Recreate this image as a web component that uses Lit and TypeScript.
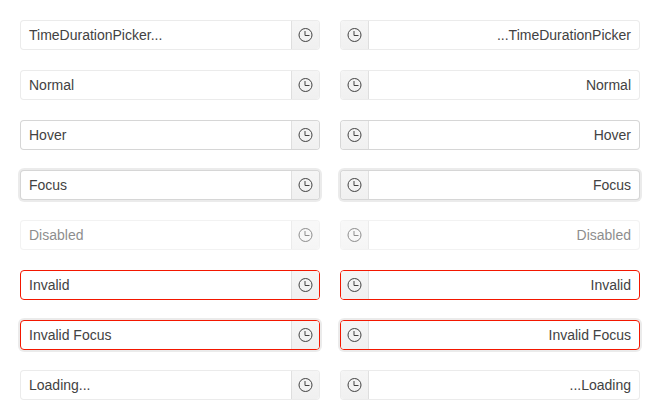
import { LitElement, html, css } from "lit";
import { customElement, property } from "lit/decorators.js";
import { classMap } from "lit/directives/class-map.js";

@customElement("duration-picker")
class DurationPicker extends LitElement {
  @property() value = "";
  @property() state = "";
  @property({ type: Boolean }) rtl = false;

  static styles = css`
    :host { display: block; }
    .picker {
      display: flex;
      box-sizing: border-box;
      width: 300px;
      height: 30px;
      border: 1px solid rgba(0, 0, 0, 0.08);
      border-radius: 4px;
      background: #fff;
      color: #424242;
      font: 14px/20px "Liberation Sans", Arial, sans-serif;
      overflow: hidden;
    }
    .rtl { direction: rtl; }
    .text { flex: 1; padding: 4px 8px; white-space: nowrap; }
    .button {
      display: flex;
      align-items: center;
      justify-content: center;
      width: 27px;
      border-inline-start: 1px solid rgba(0, 0, 0, 0.08);
      background: linear-gradient(#f5f5f5, #f0f0f0);
    }
    svg { display: block; width: 15px; height: 16px; }
    .hover { border-color: rgba(0, 0, 0, 0.16); }
    .focus { border-color: rgba(0, 0, 0, 0.16); box-shadow: 0 0 0 2px rgba(0, 0, 0, 0.08); }
    .disabled { opacity: 0.6; }
    .invalid { border-color: #f31700; }
    .invalid-focus { border-color: #f31700; box-shadow: 0 0 0 2px rgba(0, 0, 0, 0.08); }
  `;

  render() {
    const classes: Record<string, boolean> = { picker: true, rtl: this.rtl };
    if (this.state) classes[this.state] = true;
    return html`<div class=${classMap(classes)}>
      <div class="text">${this.value}</div>
      <div class="button">
        <svg viewBox="0 0 15 16" fill="none" stroke="currentColor">
          <circle cx="7.5" cy="8" r="6.5"></circle>
          <path d="M7 4v4.5H11.5"></path>
        </svg>
      </div>
    </div>`;
  }
}

@customElement("app-root")
class AppRoot extends LitElement {
  static styles = css`
    :host { display: block; background: #fff; }
    .grid {
      display: grid;
      grid-template-columns: 300px 300px;
      gap: 20px;
      padding: 20px;
    }
  `;

  render() {
    const rows = [
      ["TimeDurationPicker...", ""],
      ["Normal", ""],
      ["Hover", "hover"],
      ["Focus", "focus"],
      ["Disabled", "disabled"],
      ["Invalid", "invalid"],
      ["Invalid Focus", "invalid-focus"],
      ["Loading...", ""],
    ];
    return html`<div class="grid">
      ${rows.map(
        ([value, state]) => html`
          <duration-picker .value=${value} .state=${state}></duration-picker>
          <duration-picker .value=${value} .state=${state} .rtl=${true}></duration-picker>
        `
      )}
    </div>`;
  }
}
